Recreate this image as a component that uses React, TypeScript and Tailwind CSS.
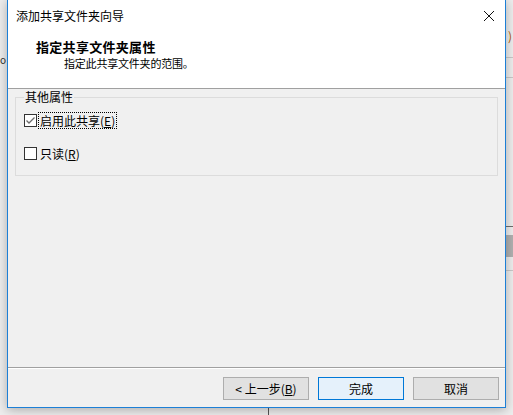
import React from 'react';

const FONT = '"Segoe UI", "Noto Sans CJK SC", "Noto Sans", sans-serif';

function Checkbox({ checked }: { checked?: boolean }) {
  return (
    <span className="flex h-[13px] w-[13px] shrink-0 items-center justify-center border border-[#333333] bg-white">
      {checked && (
        <svg width="11" height="11" viewBox="0 0 11 11">
          <path d="M1.5 5.5 L4 8 L9.5 2.5" fill="none" stroke="#6a6a6a" strokeWidth="1.3" />
        </svg>
      )}
    </span>
  );
}

function WinButton({ children, primary }: { children: React.ReactNode; primary?: boolean }) {
  return (
    <button
      type="button"
      className={
        primary
          ? 'flex h-[23px] w-[86px] items-center justify-center border border-[#0078d7] bg-[#e5f1fb] text-[12px] text-black'
          : 'flex h-[23px] w-[86px] items-center justify-center border border-[#adadad] bg-[#e1e1e1] text-[12px] text-black'
      }
    >
      {children}
    </button>
  );
}

export default function App() {
  return (
    <div
      className="relative h-[415px] w-[513px] overflow-hidden bg-[#ededed] text-black"
      style={{ fontFamily: FONT }}
    >
      {/* window behind the dialog */}
      <div className="absolute right-0 top-[57px] h-px w-[8px] bg-[#c8c8c8]" />
      <div className="absolute right-0 top-[77px] h-px w-[8px] bg-[#c8c8c8]" />
      <div className="absolute right-[1px] top-[27px] text-[12px] text-[#b25a00]">)</div>
      <div className="absolute right-0 top-[226px] h-px w-[8px] bg-[#6e6e6e]" />
      <div className="absolute right-0 top-[235px] h-[22px] w-[7px] bg-[#b0b0b0]" />
      <div className="absolute right-0 top-[270px] h-px w-[8px] bg-[#c8c8c8]" />
      <div className="absolute left-0 top-[52px] text-[10px] text-[#333]">o</div>
      <div className="absolute left-[268px] top-[406px] h-[10px] w-px bg-[#555555]" />

      {/* dialog */}
      <div className="absolute left-[7px] top-[-1px] flex h-[409px] w-[499px] flex-col border border-[#1c7fd6] bg-[#f0f0f0] shadow-[0_2px_10px_rgba(0,0,0,0.28)]">
        <div className="flex h-[88px] flex-col bg-white">
          <div className="flex h-[32px] items-center justify-between pl-[8px] pr-[8px]">
            <span className="text-[12px]">添加共享文件夹向导</span>
            <svg width="12" height="12" viewBox="0 0 12 12" className="mr-[2px]">
              <path d="M1 1 L11 11 M11 1 L1 11" stroke="#111" strokeWidth="1" />
            </svg>
          </div>
          <div className="pl-[28px] pt-[7px] text-[13px] font-bold leading-[16px] tracking-[0.3px]">
            指定共享文件夹属性
          </div>
          <div className="pl-[56px] text-[11px] leading-[16px] tracking-[-0.2px]">
            指定此共享文件夹的范围。
          </div>
        </div>
        <div className="h-px bg-[#a0a0a0]" />

        <div className="flex-1 px-[7px]">
          <fieldset className="h-[87px] border border-[#dcdcdc] pl-[8px]">
            <legend className="px-px text-[12px] leading-[16px]">其他属性</legend>
            <div className="flex flex-col gap-[17px] pt-[7px]">
              <label className="flex items-center gap-[1px]">
                <Checkbox checked />
                <span className="border border-dotted border-black px-px text-[12px] leading-[15px]">
                  启用此共享(<span className="underline">E</span>)
                </span>
              </label>
              <label className="flex items-center gap-[2px]">
                <Checkbox />
                <span className="px-px text-[12px] leading-[15px]">
                  只读(<span className="underline">R</span>)
                </span>
              </label>
            </div>
          </fieldset>
        </div>

        <div className="h-px bg-[#a0a0a0]" />
        <div className="h-px bg-white" />
        <div className="flex justify-end gap-[9px] pb-[7px] pr-[6px] pt-[8px]">
          <WinButton>
            &lt; 上一步(<span className="underline">B</span>)
          </WinButton>
          <WinButton primary>完成</WinButton>
          <WinButton>取消</WinButton>
        </div>
      </div>
    </div>
  );
}
